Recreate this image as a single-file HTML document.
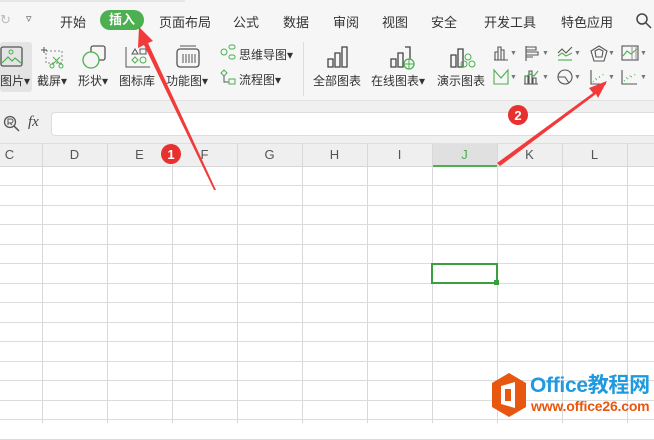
<!DOCTYPE html>
<html><head><meta charset="utf-8"><style>
*{margin:0;padding:0;box-sizing:border-box}
body{width:654px;height:420px;overflow:hidden;background:#fff;font-family:"Liberation Sans","Noto Sans CJK SC",sans-serif;position:relative;color:#333}
.a{position:absolute;white-space:nowrap}
.t{font-size:13px;color:#333;top:12px}
.l{font-size:12px;color:#333}
.dd{position:absolute;font-size:7px;color:#777}
</style></head><body>
<div class="a" style="left:0;top:0;width:654px;height:100px;background:#f6f6f6"></div>
<div class="a" style="left:0;top:0;width:185px;height:2px;background:#e6e6e6"></div>
<div class="a" style="left:0;top:100px;width:654px;height:43px;background:#f0f0f0;border-top:1px solid #e0e0e0"></div>
<div class="a" style="left:0;top:12px;font-size:13px;color:#bbb">↻</div>
<div class="a" style="left:26px;top:12px;font-size:11px;color:#555">▿</div>
<div class="a t" style="left:60px">开始</div>
<div class="a" style="left:100px;top:10px;width:44px;height:20px;border-radius:10px;background:#4caf50;color:#fff;font-size:13px;font-weight:bold;text-align:center;line-height:20px">插入</div>
<div class="a t" style="left:159px">页面布局</div>
<div class="a t" style="left:233px">公式</div>
<div class="a t" style="left:283px">数据</div>
<div class="a t" style="left:333px">审阅</div>
<div class="a t" style="left:382px">视图</div>
<div class="a t" style="left:431px">安全</div>
<div class="a t" style="left:484px">开发工具</div>
<div class="a t" style="left:561px">特色应用</div>
<svg class="a" style="left:636px;top:13px" width="16" height="16"><circle cx="6" cy="6" r="5" fill="none" stroke="#444" stroke-width="1.5"/><path d="M10 10l5 5" stroke="#444" stroke-width="1.5"/></svg>
<div class="a" style="left:0;top:42px;width:32px;height:50px;background:#e4e4e4;border-radius:3px"></div>
<svg class="a" style="left:0;top:46px" width="24" height="22"><rect x="1" y="1" width="21" height="19" rx="2" fill="none" stroke="#555" stroke-width="1.3"/><path d="M2 17l6-6 4 4 3-3 6 5" fill="none" stroke="#4caf50" stroke-width="1.2"/><circle cx="11" cy="6" r="2" fill="none" stroke="#4caf50"/></svg>
<div class="a l" style="left:0;top:72px">图片▾</div>
<svg class="a" style="left:40px;top:45px" width="26" height="24"><path d="M4 2v6M1 5h6" stroke="#555"/><rect x="6" y="6" width="16" height="12" fill="none" stroke="#888" stroke-dasharray="2 2"/><circle cx="12" cy="21" r="2" fill="none" stroke="#4caf50"/><circle cx="21" cy="21" r="2" fill="none" stroke="#4caf50"/><path d="M13 19l7-7M20 19l-7-7" stroke="#4caf50"/></svg>
<div class="a l" style="left:37px;top:72px">截屏▾</div>
<svg class="a" style="left:80px;top:44px" width="28" height="26"><rect x="11" y="2" width="14" height="14" rx="2" fill="none" stroke="#555" stroke-width="1.3"/><circle cx="11" cy="16" r="8" fill="#f6f6f6" stroke="#4caf50" stroke-width="1.3"/></svg>
<div class="a l" style="left:78px;top:72px">形状▾</div>
<svg class="a" style="left:125px;top:45px" width="26" height="24"><path d="M1 2v20h24" fill="none" stroke="#555"/><path d="M7 9l3-5 3 5z M15 4h6v5h-6z" fill="none" stroke="#555"/><path d="M10 12l3 3-3 3-3-3z" fill="none" stroke="#4caf50"/><circle cx="18" cy="15" r="3" fill="none" stroke="#4caf50"/></svg>
<div class="a l" style="left:119px;top:72px">图标库</div>
<svg class="a" style="left:175px;top:45px" width="26" height="24"><rect x="2" y="4" width="22" height="18" rx="3" fill="none" stroke="#555" stroke-width="1.3"/><path d="M5 1h16M8 9v9M11 9v9M14 9v9M17 9v9M20 9v9" stroke="#555"/></svg>
<div class="a l" style="left:166px;top:72px">功能图▾</div>
<svg class="a" style="left:220px;top:44px" width="16" height="16"><circle cx="4" cy="8" r="3" fill="none" stroke="#4caf50"/><rect x="9" y="1" width="6" height="4" rx="2" fill="none" stroke="#4caf50"/><rect x="9" y="11" width="6" height="4" rx="2" fill="none" stroke="#4caf50"/></svg>
<div class="a l" style="left:239px;top:46px">思维导图▾</div>
<svg class="a" style="left:220px;top:69px" width="16" height="16"><path d="M4 1l3 3-3 3-3-3z" fill="none" stroke="#4caf50"/><path d="M4 7v6h5" fill="none" stroke="#555"/><rect x="9" y="10" width="6" height="5" fill="none" stroke="#4caf50"/></svg>
<div class="a l" style="left:239px;top:71px">流程图▾</div>
<div class="a" style="left:303px;top:42px;width:1px;height:54px;background:#ddd"></div>
<svg class="a" style="left:325px;top:45px" width="26" height="24"><path d="M3 14h5v8H3zM10 8h5v14h-5zM17 2h5v20h-5z" fill="none" stroke="#444" stroke-width="1.3"/></svg>
<div class="a l" style="left:313px;top:72px">全部图表</div>
<svg class="a" style="left:388px;top:45px" width="28" height="26"><path d="M3 14h5v8H3zM10 8h5v14h-5zM17 2h5v12" fill="none" stroke="#444" stroke-width="1.3"/><circle cx="21" cy="19" r="5" fill="#f6f6f6" stroke="#4caf50" stroke-width="1.3"/><path d="M16 19h10M21 14v10" stroke="#4caf50"/></svg>
<div class="a l" style="left:371px;top:72px">在线图表▾</div>
<svg class="a" style="left:448px;top:45px" width="28" height="26"><path d="M3 10h5v12H3zM10 4h5v18h-5z" fill="none" stroke="#444" stroke-width="1.3"/><circle cx="20" cy="12" r="3" fill="none" stroke="#4caf50"/><circle cx="16" cy="19" r="3" fill="none" stroke="#4caf50"/><circle cx="24" cy="19" r="3" fill="none" stroke="#4caf50"/></svg>
<div class="a l" style="left:437px;top:72px">演示图表</div>
<svg class="a" style="left:492px;top:44px" width="160" height="46" fill="none" stroke-width="1.1">
<g stroke="#555"><path d="M2 16h14M3 16V8h3v8M6 16V3h3v13M9 16V6h3v10"/></g>
<g stroke="#555"><path d="M34 2v15M34 3h10v3H34M34 8h12v3H34M34 13h7"/></g>
<g><path d="M66 9l4-4 4 4 6-6" stroke="#555"/><path d="M66 12l4-3 4 3 6-3" stroke="#4caf50"/><path d="M66 16h14" stroke="#4caf50"/></g>
<g stroke="#555"><path d="M107 2l8 5-3 10h-10l-3-10z M103 7l4-2 4 2-1 6h-6z"/></g>
<g><rect x="130" y="2" width="16" height="14" stroke="#555"/><path d="M131 12l4-5 4 3 6-5" stroke="#4caf50"/><path d="M140 3v13M144 3v13" stroke="#999"/></g>
<g><path d="M2 26v14h14V26l-7 8z" stroke="#4caf50"/></g>
<g stroke="#555"><path d="M32 40h14M33 40v-8h3v8M37 40V27h3v13M41 40v-6h3v6"/><path d="M33 33l5-3 4 2 4-5" stroke="#4caf50"/></g>
<g stroke="#555"><circle cx="73" cy="33" r="7"/><path d="M66 33h7l4 6"/></g>
<g><path d="M99 26v14h15" stroke="#555"/><g stroke="#4caf50" stroke-dasharray="1 3"><path d="M101 38l4-5M104 36l5-4M107 33l5-3"/></g></g>
<g><path d="M130 26v14h15" stroke="#555"/><g stroke="#4caf50" stroke-dasharray="1 3"><path d="M132 37l12-7M134 34l6-3"/></g></g>
</svg>
<div class="dd" style="left:510px;top:50px">▼</div><div class="dd" style="left:542px;top:50px">▼</div><div class="dd" style="left:574px;top:50px">▼</div><div class="dd" style="left:608px;top:50px">▼</div><div class="dd" style="left:640px;top:50px">▼</div>
<div class="dd" style="left:510px;top:74px">▼</div><div class="dd" style="left:542px;top:74px">▼</div><div class="dd" style="left:574px;top:74px">▼</div><div class="dd" style="left:608px;top:74px">▼</div><div class="dd" style="left:640px;top:74px">▼</div>
<svg class="a" style="left:3px;top:115px" width="18" height="18"><circle cx="7" cy="7" r="5.5" fill="none" stroke="#555" stroke-width="1.3"/><path d="M11 11l5 5" stroke="#555" stroke-width="1.5"/><path d="M5 10V4h3a2 2 0 010 4H5M7 8l2 2" fill="none" stroke="#555"/></svg>
<div class="a" style="left:28px;top:114px;font-size:15px;font-style:italic;color:#444;font-family:'Liberation Serif',serif">fx</div>
<div class="a" style="left:51px;top:112px;width:610px;height:24px;background:#fff;border:1px solid #ddd;border-radius:4px"></div>
<div class="a" style="left:0;top:143px;width:654px;height:24px;background:#efefef;border-top:1px solid #ddd;border-bottom:1px solid #d6d6d6"></div>
<div class="a" style="left:432px;top:143px;width:65px;height:24px;background:#e0e0e0;border-bottom:2px solid #4caf50"></div>
<div id="g"></div>
<script>
var cols=['C','D','E','F','G','H','I','J','K','L'],h='';
for(var i=0;i<10;i++){var x=-23+i*65;h+='<div class="a" style="left:'+x+'px;top:147px;width:65px;text-align:center;font-size:13px;color:'+(i==7?'#4caf50':'#555')+'">'+cols[i]+'</div>';
h+='<div class="a" style="left:'+(x+65)+'px;top:143px;width:1px;height:280px;background:#d8d8d8"></div>';}
for(var r=0;r<14;r++){h+='<div class="a" style="left:0;top:'+Math.round(185+r*19.5)+'px;width:654px;height:1px;background:#dcdcdc"></div>';}
document.getElementById('g').innerHTML=h;
</script>
<div class="a" style="left:431px;top:263px;width:67px;height:21px;border:2px solid #3aa03e"></div>
<div class="a" style="left:494px;top:280px;width:5px;height:5px;background:#3aa03e"></div>
<svg class="a" style="left:490px;top:372px" width="38" height="46"><path d="M19 1l17 10v24L19 45 2 35V11z" fill="#e8570f"/><path d="M11 14l14-4v26l-14-4z" fill="#fff"/><path d="M15 17h6v12h-6z" fill="#e8570f"/></svg>
<div class="a" style="left:530px;top:369px;font-size:21px;font-weight:bold;color:#1f9ae0;letter-spacing:-0.3px">Office教程网</div>
<div class="a" style="left:531px;top:398px;font-size:14px;font-weight:bold;color:#e8570f;letter-spacing:-0.2px">www.office26.com</div>
<svg class="a" style="left:0;top:0" width="654" height="420">
<path d="M216 190L214 190 144 45 138 48 139 27 153 41 148 43z" fill="#f23a3a"/>
<path d="M497 163L593 93 589 88 607 81 598 98 596 94 500 166z" fill="#f23a3a"/>
<circle cx="171" cy="154" r="10" fill="#e8302f"/><text x="171" y="159" font-size="13" font-weight="bold" fill="#fff" text-anchor="middle" font-family="Liberation Sans">1</text>
<circle cx="518" cy="115" r="10" fill="#e8302f"/><text x="518" y="120" font-size="13" font-weight="bold" fill="#fff" text-anchor="middle" font-family="Liberation Sans">2</text>
</svg>
</body></html>
